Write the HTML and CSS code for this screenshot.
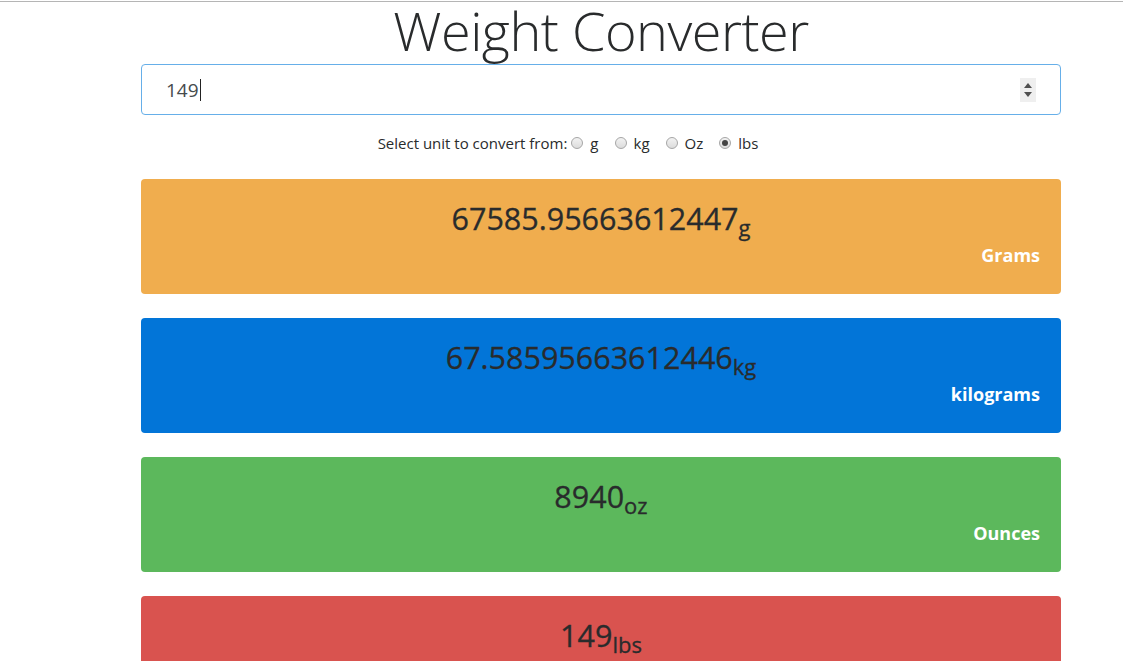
FILE: index.html
```html
<!DOCTYPE html>
<html lang="en">
<head>
<meta charset="utf-8">
<title>Weight Converter</title>
<link rel="stylesheet" href="styles.css">
</head>
<body>
<div class="topline"></div>
<main class="container">
  <h1 class="title">Weight Converter</h1>
  <div class="field">
    <span class="value">149</span><span class="caret"></span>
    <span class="spin"><span class="up"></span><span class="down"></span></span>
  </div>
  <div class="units">
    <span class="lead">Select unit to convert from:</span>
    <label class="opt"><span class="radio"></span>g</label>
    <label class="opt"><span class="radio"></span>kg</label>
    <label class="opt"><span class="radio"></span>Oz</label>
    <label class="opt"><span class="radio on"></span>lbs</label>
  </div>
  <section class="card orange">
    <div class="num">67585.95663612447<sub>g</sub></div>
    <div class="label">Grams</div>
  </section>
  <section class="card blue">
    <div class="num">67.58595663612446<sub>kg</sub></div>
    <div class="label">kilograms</div>
  </section>
  <section class="card green">
    <div class="num">8940<sub>oz</sub></div>
    <div class="label">Ounces</div>
  </section>
  <section class="card red">
    <div class="num">149<sub>lbs</sub></div>
    <div class="label">Pounds</div>
  </section>
</main>
</body>
</html>
```
FILE: styles.css
```css
* { box-sizing: border-box; }
html, body { margin: 0; padding: 0; background: #fff; }
body {
  font-family: "Open Sans", "Noto Sans", sans-serif;
  color: #292b2c;
  overflow: hidden;
  height: 661px;
}
.topline { height: 2px; border-top: 1px solid #fff; background: #b5b5b5; }
.container {
  width: 920px;
  margin-left: 141px;
  display: flex;
  flex-direction: column;
}
.title {
  margin: -5px 0 0 0;
  height: 67px;
  text-align: center;
  font-weight: 300;
  font-size: 54px;
  line-height: 66px;
  color: #292b2c;
  letter-spacing: -0.5px;
}
.field {
  height: 51px;
  border: 1px solid #66afe9;
  border-radius: 4px;
  display: flex;
  align-items: center;
  padding: 0 24px 0 24px;
  font-size: 19px;
  color: #464a4c;
}
.caret { width: 1px; height: 22px; background: #222; margin-left: 1px; }
.spin {
  margin-left: auto;
  width: 16px;
  height: 24px;
  background: #efefef;
  display: flex;
  flex-direction: column;
  align-items: center;
  justify-content: center;
  gap: 4px;
}
.up { width: 0; height: 0; border-left: 4px solid transparent; border-right: 4px solid transparent; border-bottom: 5px solid #505050; }
.down { width: 0; height: 0; border-left: 4px solid transparent; border-right: 4px solid transparent; border-top: 5px solid #505050; }
.units {
  margin-top: 17px;
  height: 22px;
  display: flex;
  justify-content: center;
  align-items: center;
  font-size: 15px;
  color: #292b2c;
  padding-right: 66px;
}
.lead { margin-right: 4px; }
.opt { display: inline-flex; align-items: center; margin-right: 16px; }
.opt:last-child { margin-right: 0; }
.radio {
  width: 12px;
  height: 12px;
  border-radius: 50%;
  border: 1px solid #a6a6a6;
  background: linear-gradient(#f2f2f2, #dcdcdc);
  margin-right: 7px;
  display: inline-flex;
  align-items: center;
  justify-content: center;
}
.radio.on::after {
  content: "";
  width: 6px;
  height: 6px;
  border-radius: 50%;
  background: #444;
}
.card {
  margin-top: 25px;
  height: 115px;
  border-radius: 4px;
  padding: 17px 21px 0 21px;
  display: flex;
  flex-direction: column;
}
.card + .card { margin-top: 24px; }
.orange { background: #f0ad4e; }
.blue { background: #0275d8; }
.green { background: #5cb85c; }
.red { background: #d9534f; }
.num {
  text-align: center;
  font-size: 30.5px;
  line-height: 44px;
  color: #292b2c;
  -webkit-text-stroke: 0.3px #292b2c;
}
.num sub {
  font-size: 22px;
  vertical-align: -6px;
  line-height: 0;
}
.label {
  margin-top: 3px;
  text-align: right;
  font-weight: 700;
  font-size: 18px;
  color: #fff;
}
```
